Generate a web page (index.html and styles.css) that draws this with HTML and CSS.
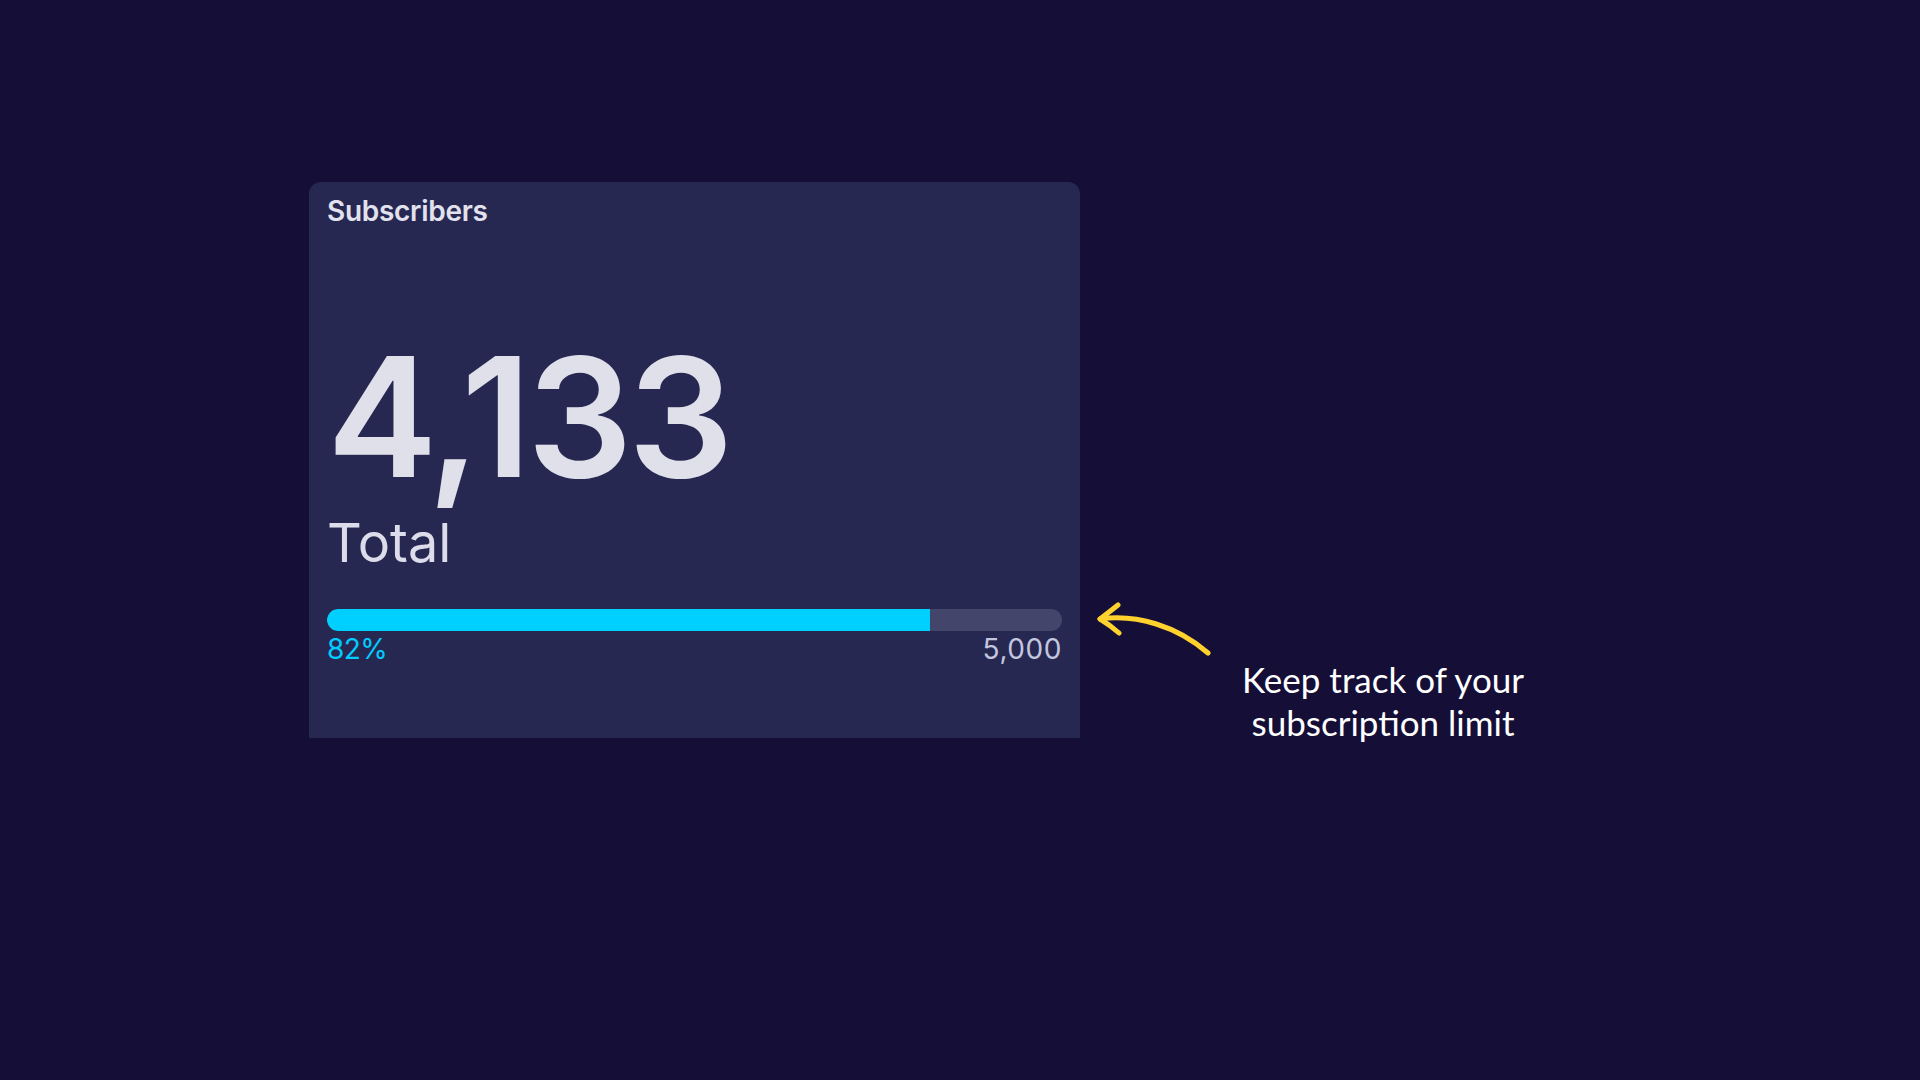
FILE: index.html
```html
<!DOCTYPE html>
<html lang="en">
<head>
    <meta charset="UTF-8">
    <meta name="viewport" content="width=device-width, initial-scale=1.0">
    <title>Subscribers</title>
    <link rel="stylesheet" href="styles.css">
</head>
<body>
    <div class="stage">
        <!-- Subscribers card -->
        <div class="card">
            <div class="card-title">Subscribers</div>
            <div class="big-number">4,133</div>
            <div class="big-label">Total</div>
            <div class="bar">
                <div class="bar-fill" style="width: 82%"></div>
            </div>
            <div class="bar-labels">
                <span class="bar-percent">82%</span>
                <span class="bar-limit">5,000</span>
            </div>
        </div>

        <!-- Annotation -->
        <div class="note">
            <svg class="note-arrow" width="114" height="54" viewBox="0 0 114 54" fill="none">
                <path d="M3 17 C 40 12, 80 24, 111 51" stroke="#ffd22e" stroke-width="5" stroke-linecap="round"/>
                <path d="M21 3 Q 11 11 3 17 Q 13 23 22 31" stroke="#ffd22e" stroke-width="5" stroke-linecap="round" stroke-linejoin="round"/>
            </svg>
            <div class="note-text">Keep track of your<br>subscription limit</div>
        </div>
    </div>
</body>
</html>
```

FILE: styles.css
```css
body {
    margin: 0;
    background-color: #150f38;
    font-family: Inter, "Noto Sans", sans-serif;
}

.stage {
    display: flex;
    align-items: flex-start;
    padding: 182px 0 0 309px;
}

.card {
    width: 771px;
    height: 556px;
    box-sizing: border-box;
    padding: 13px 18px 0 18px;
    background-color: #272852;
    border-radius: 12px 12px 0 0;
    display: flex;
    flex-direction: column;
}

.card-title {
    font-size: 28px;
    font-weight: 600;
    line-height: 1.2;
    letter-spacing: -0.01em;
    color: #e2e2ef;
}

.big-number {
    margin-top: 105px;
    font-size: 166px;
    font-weight: 600;
    line-height: 1;
    letter-spacing: -0.027em;
    color: #e0e0ea;
}

.big-label {
    margin-top: 11px;
    font-size: 54px;
    font-weight: 400;
    line-height: 1.2;
    color: #dcdcea;
}

.bar {
    margin-top: 34px;
    height: 22px;
    border-radius: 11px;
    background-color: #44456b;
    overflow: hidden;
}

.bar-fill {
    height: 100%;
    background-color: #00d0ff;
    border-radius: 11px 0 0 11px;
}

.bar-labels {
    margin-top: 2px;
    display: flex;
    justify-content: space-between;
    font-size: 28px;
    line-height: 1.2;
}

.bar-percent {
    color: #00ccff;
    letter-spacing: -0.02em;
}

.bar-limit {
    color: #c3c6df;
    letter-spacing: 0.02em;
}

.note {
    margin: 420px 0 0 17px;
    display: flex;
    flex-direction: column;
}

.note-arrow {
    display: block;
}

.note-text {
    margin: 2px 0 0 136px;
    width: 300px;
    font-family: Lato, "Open Sans", sans-serif;
    font-size: 35px;
    line-height: 43px;
    text-align: center;
    color: #ffffff;
}
```
